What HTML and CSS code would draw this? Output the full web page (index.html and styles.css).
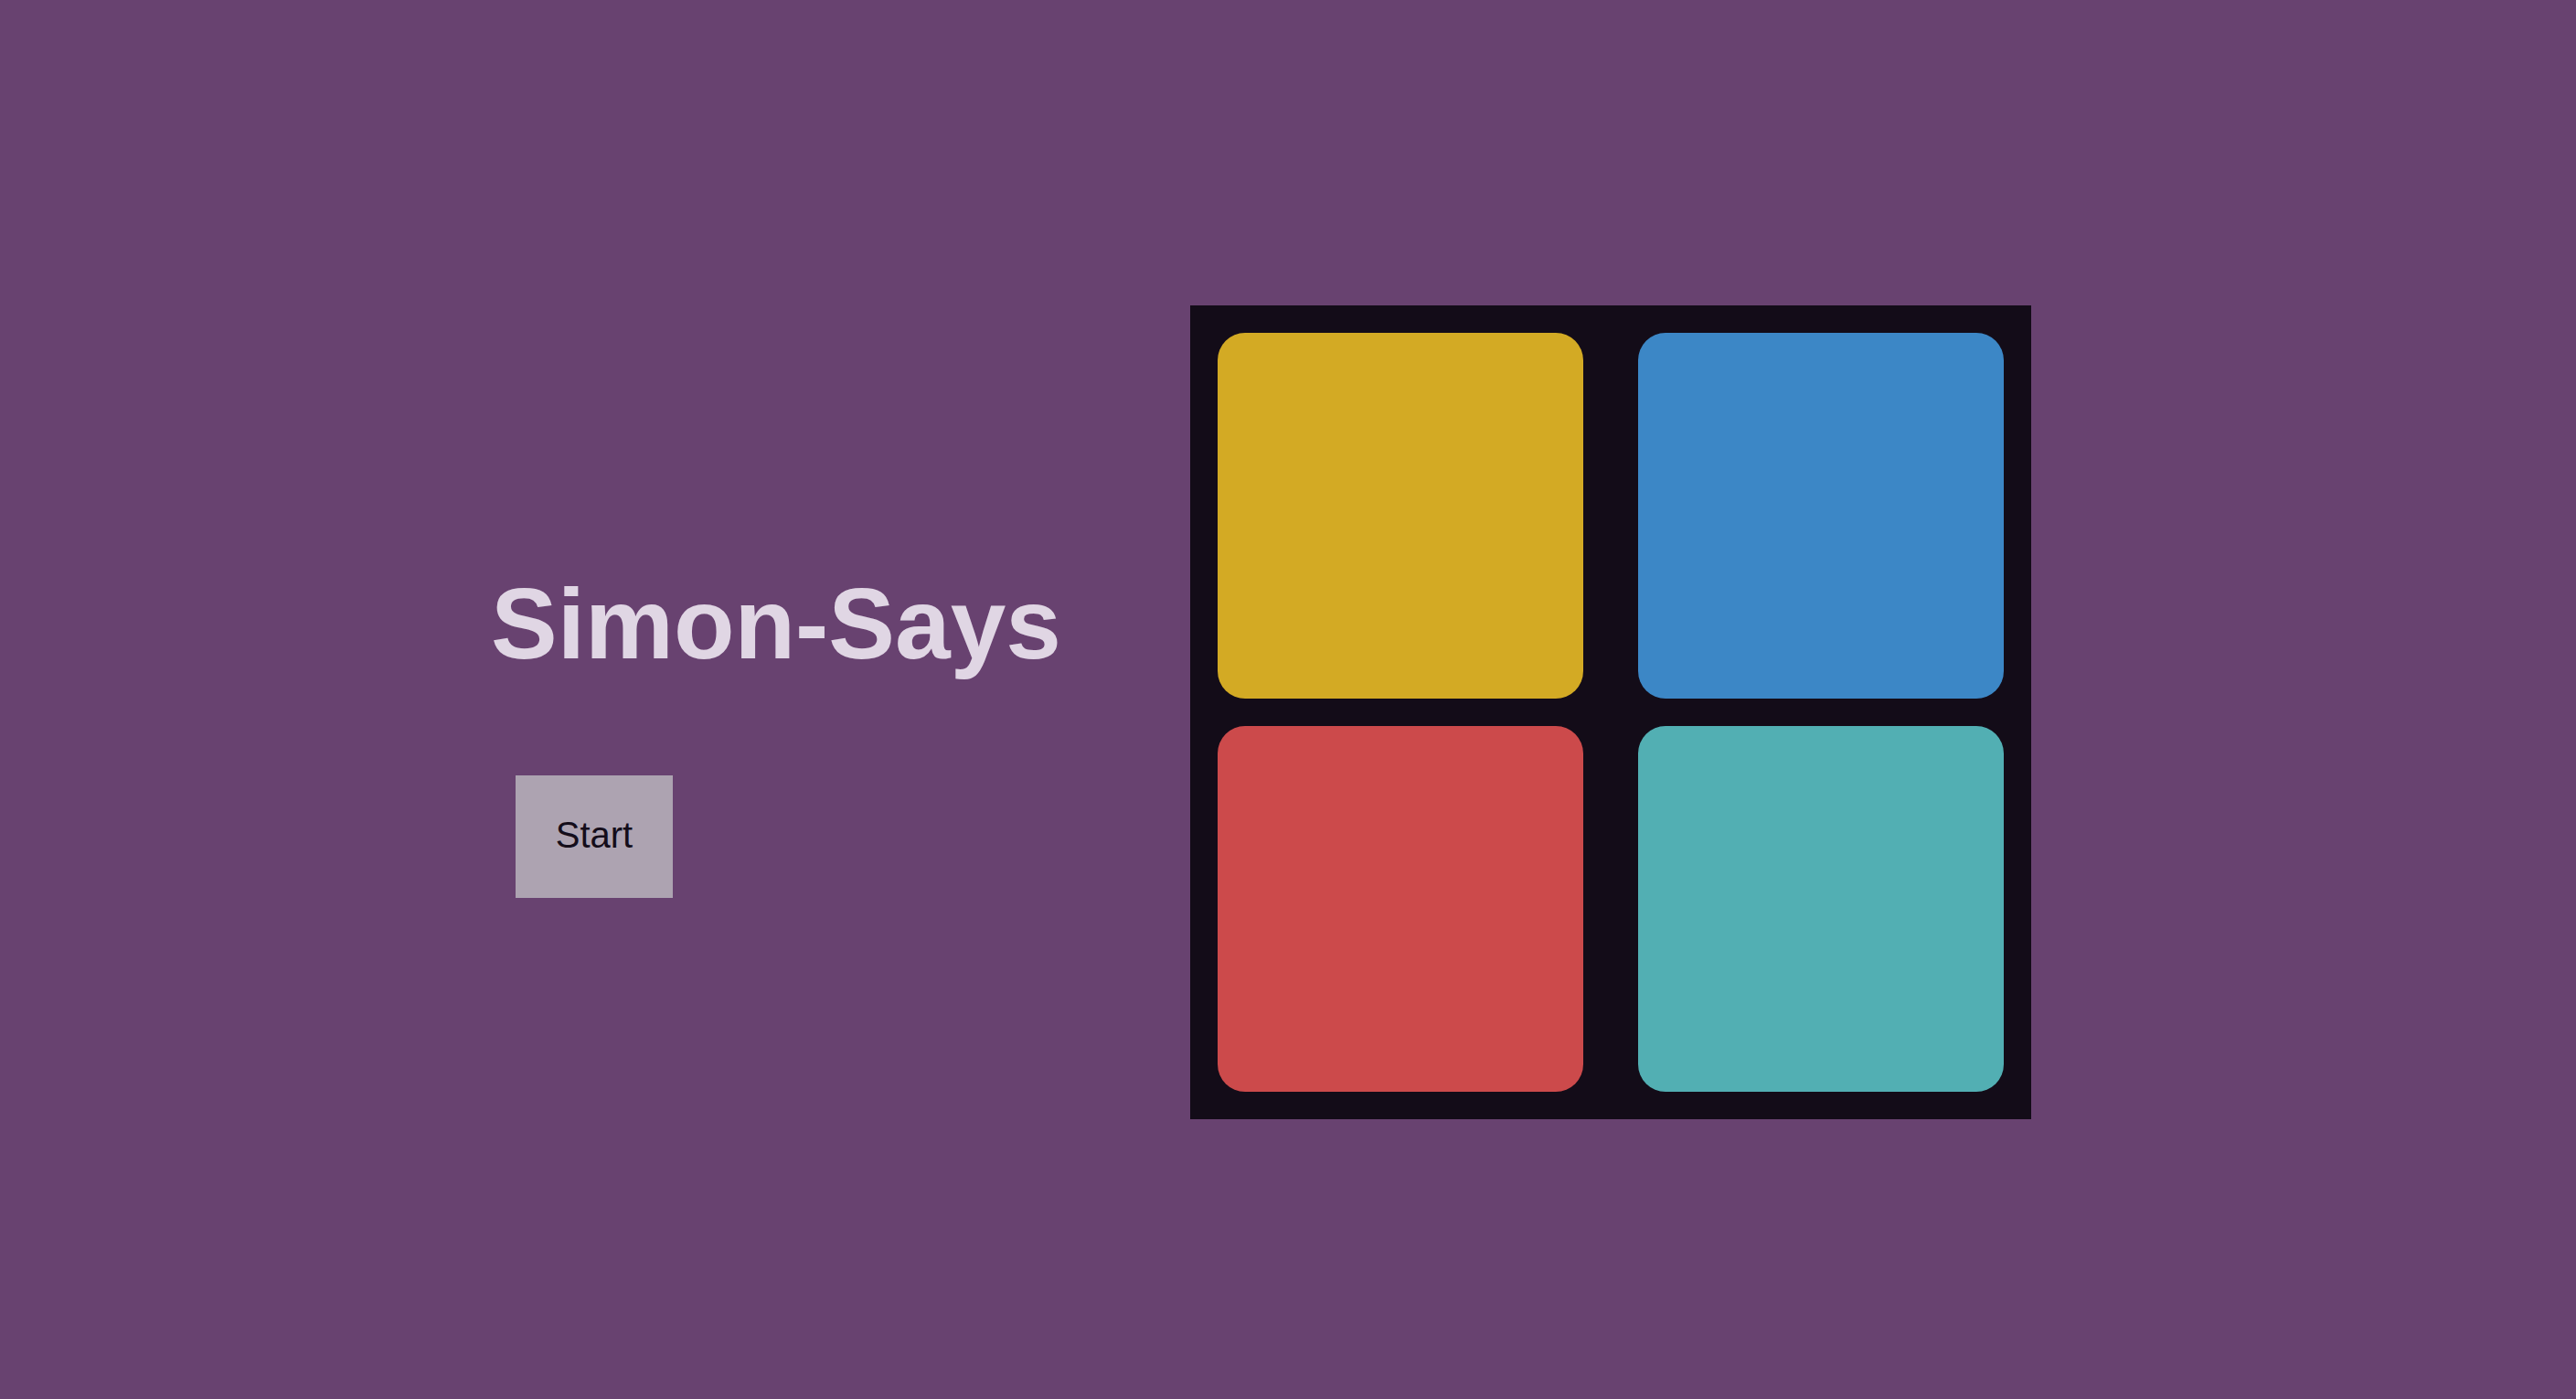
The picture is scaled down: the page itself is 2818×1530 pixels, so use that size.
FILE: index.html
```html
<!DOCTYPE html>
<html lang="en">
<head>
<meta charset="utf-8">
<title>Simon-Says</title>
<link rel="stylesheet" href="styles.css">
</head>
<body>
<main class="page">
  <section class="intro">
    <h1 class="title">Simon-Says</h1>
    <button class="start" type="button">Start</button>
  </section>
  <section class="board">
    <div class="pad pad-yellow"></div>
    <div class="pad pad-blue"></div>
    <div class="pad pad-red"></div>
    <div class="pad pad-teal"></div>
  </section>
</main>
</body>
</html>
```

FILE: styles.css
```css
html, body {
  margin: 0;
  padding: 0;
}

html {
  height: 1530px;
  overflow: hidden;
}

body {
  background: #684270;
  font-family: "Liberation Sans", Arial, Helvetica, sans-serif;
  height: 1530px;
  overflow: hidden;
}

.page {
  display: flex;
  align-items: flex-start;
  padding-top: 334px;
  padding-left: 537px;
}

.intro {
  display: flex;
  flex-direction: column;
  align-items: flex-start;
  margin-top: 294px;
  width: 765px;
}

.title {
  margin: 0;
  font-size: 109px;
  line-height: 1;
  font-weight: 700;
  color: #e0d6e4;
  white-space: nowrap;
}

.start {
  margin-top: 111px;
  margin-left: 27px;
  width: 172px;
  height: 134px;
  padding: 0 0 5px 0;
  border: none;
  border-radius: 0;
  background: #ada3b1;
  color: #140d1a;
  font-family: "Liberation Sans", Arial, Helvetica, sans-serif;
  font-size: 40px;
  line-height: 1;
}

.board {
  display: grid;
  grid-template-columns: 400px 400px;
  grid-template-rows: 400px 400px;
  column-gap: 60px;
  row-gap: 30px;
  padding: 30px;
  background: #130c18;
}

.pad {
  border-radius: 30px;
}

.pad-yellow { background: #d3aa24; }
.pad-blue { background: #3c87c6; }
.pad-red { background: #cc4a4b; }
.pad-teal { background: #52afb3; }
```
